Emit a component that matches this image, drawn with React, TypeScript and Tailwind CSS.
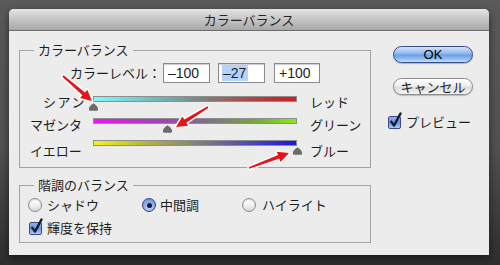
import React from "react";

const JP = "font-['Noto_Sans_CJK_JP','Noto_Sans_CJK_SC',sans-serif]";
const LAT = "font-['Liberation_Sans',Arial,sans-serif]";

function Thumb({ value }: { value: number }) {
  const left = ((value + 100) / 200) * 204 - 4.5;
  return (
    <svg
      width="9"
      height="8"
      viewBox="0 0 9 8"
      className="absolute top-[7px]"
      style={{ left }}
    >
      <path
        d="M4.5 0.3 C5.8 1.6 9 3.2 9 5.6 L9 6.5 C9 7.3 8.4 7.8 7.6 7.8 L1.4 7.8 C0.6 7.8 0 7.3 0 6.5 L0 5.6 C0 3.2 3.2 1.6 4.5 0.3 Z"
        fill="#6b6b6b"
      />
    </svg>
  );
}

function Track({ grad, value }: { grad: string; value: number }) {
  return (
    <div className="relative w-[204px] h-[22px] shrink-0">
      <div className={`h-[6px] border border-[#8e8e8e] ${grad}`} />
      <Thumb value={value} />
    </div>
  );
}

function Radio({ checked }: { checked?: boolean }) {
  if (checked) {
    return (
      <div className="w-[14px] h-[14px] rounded-full border border-[#34437c] bg-[radial-gradient(circle_at_50%_70%,#c4dcfa_0%,#8fb2ea_45%,#5f85cf_100%)] flex items-center justify-center shrink-0">
        <div className="w-[5px] h-[5px] rounded-full bg-[#131a33]" />
      </div>
    );
  }
  return (
    <div className="w-[14px] h-[14px] rounded-full border border-[#8a8a8a] bg-[linear-gradient(180deg,#ffffff_0%,#f2f2f2_50%,#d6d6d6_100%)] shadow-[inset_0_1px_1px_rgba(0,0,0,0.15)] shrink-0" />
  );
}

function Check() {
  return (
    <div className="relative w-[13px] h-[13px] shrink-0 rounded-[2px] border border-[#3d4c86] bg-[linear-gradient(180deg,#8fb0ea_0%,#6b93dc_50%,#a9cbf5_100%)]">
      <svg
        width="14"
        height="16"
        viewBox="0 0 14 16"
        className="absolute left-[0px] top-[-5px] overflow-visible"
      >
        <path
          d="M2.2 9.6 L5 13.6 L11.6 1.4"
          fill="none"
          stroke="#141a30"
          strokeWidth="2.3"
          strokeLinecap="round"
          strokeLinejoin="round"
        />
      </svg>
    </div>
  );
}

function arrowPoints(x1: number, y1: number, x2: number, y2: number) {
  const dx = x2 - x1;
  const dy = y2 - y1;
  const L = Math.hypot(dx, dy);
  const ux = dx / L;
  const uy = dy / L;
  const nx = -uy;
  const ny = ux;
  const headLen = 11;
  const headW = 5.5;
  const st = 0.9;
  const sh = 1.9;
  const bx = x2 - ux * headLen;
  const by = y2 - uy * headLen;
  const pts = [
    [x1 + nx * st, y1 + ny * st],
    [bx + nx * sh, by + ny * sh],
    [bx + nx * headW, by + ny * headW],
    [x2, y2],
    [bx - nx * headW, by - ny * headW],
    [bx - nx * sh, by - ny * sh],
    [x1 - nx * st, y1 - ny * st],
  ];
  return pts.map((p) => `${p[0].toFixed(1)},${p[1].toFixed(1)}`).join(" ");
}

function Arrow({ a }: { a: [number, number, number, number] }) {
  const pts = arrowPoints(a[0], a[1], a[2], a[3]);
  return (
    <g>
      <polygon points={pts} fill="#ffffff" stroke="#ffffff" strokeWidth="3" strokeLinejoin="round" />
      <polygon points={pts} fill="#e8121b" />
    </g>
  );
}

function SliderRow({
  left,
  leftCls,
  right,
  labelCls,
  grad,
  value,
}: {
  left: string;
  leftCls: string;
  right: string;
  labelCls: string;
  grad: string;
  value: number;
}) {
  return (
    <div className="flex h-[22px]">
      <div className={`w-[73px] shrink-0 text-[13px] leading-[16px] ${leftCls} ${labelCls}`}>{left}</div>
      <Track grad={grad} value={value} />
      <div className={`ml-[13px] text-[13px] leading-[16px] ${labelCls}`}>{right}</div>
    </div>
  );
}

export default function App() {
  return (
    <div
      className={`relative w-[500px] h-[265px] overflow-hidden bg-[linear-gradient(180deg,#5a5a5a_0%,#525252_55%,#2e2e2e_100%)] pl-[9px] pt-[9px] text-[#1e1e1e] ${JP}`}
    >
      <div className="w-[480px] h-[246px] rounded-t-[5px] bg-[#ececec] shadow-[0_3px_8px_rgba(0,0,0,0.55)] flex flex-col overflow-hidden">
        <div className="h-[22px] shrink-0 border-b border-[#6c6c6c] bg-[linear-gradient(180deg,#e4e4e4_0%,#c4c4c4_50%,#a8a8a8_100%)] flex items-center justify-center text-[13px] leading-none text-[#262626]">
          カラーバランス
        </div>
        <div className="flex pl-[10px]">
          <div className="w-[352px] pt-[11px] shrink-0">
            <fieldset className="border border-[#a2a2a2]">
              <legend className="ml-[14px] px-[4px] text-[13px] leading-[16px]">カラーバランス</legend>
              <div className="mt-[5px] h-[20px] flex items-center pl-[50px]">
                <div className="w-[93px] shrink-0 text-[13px] leading-[16px]">カラーレベル：</div>
                <div className={`w-[47px] h-[20px] border border-[#8a8a8a] bg-white shadow-[inset_0_1px_1px_rgba(0,0,0,0.2)] pl-[4px] text-[14px] leading-[18px] ${LAT}`}>
                  –100
                </div>
                <div className={`ml-[8px] w-[47px] h-[20px] border border-[#8a8a8a] bg-white shadow-[inset_0_1px_1px_rgba(0,0,0,0.2)] pl-[3px] pt-[1px] text-[14px] leading-[16px] ${LAT}`}>
                  <span className="bg-[#b3d3fd] inline-block pl-[1px] pr-[2px]">–27</span>
                </div>
                <div className={`ml-[9px] w-[46px] h-[20px] border border-[#8a8a8a] bg-white shadow-[inset_0_1px_1px_rgba(0,0,0,0.2)] pl-[4px] text-[14px] leading-[18px] ${LAT}`}>
                  +100
                </div>
              </div>
              <div className="mt-[13px] pb-[5px]">
                <SliderRow
                  left="シアン"
                  leftCls="pl-[23px] tracking-[1.5px]"
                  right="レッド"
                  labelCls="mt-[-2px]"
                  grad="bg-[linear-gradient(90deg,#86f6f6_0%,#6fbcbc_30%,#7f7f7f_55%,#b04040_80%,#d61b1b_100%)]"
                  value={-100}
                />
                <SliderRow
                  left="マゼンタ"
                  leftCls="pl-[10px]"
                  right="グリーン"
                  labelCls="mt-[-1px]"
                  grad="bg-[linear-gradient(90deg,#ee16f0_0%,#a43cc0_30%,#7e6f86_55%,#78a83a_80%,#82ee12_100%)]"
                  value={-27}
                />
                <SliderRow
                  left="イエロー"
                  leftCls="pl-[10px]"
                  right="ブルー"
                  labelCls="mt-[3px]"
                  grad="bg-[linear-gradient(90deg,#f6f21a_0%,#b8b440_25%,#7a7a80_55%,#4a44b8_80%,#1c14e6_100%)]"
                  value={100}
                />
              </div>
            </fieldset>
            <fieldset className="mt-[9px] border border-[#a2a2a2]">
              <legend className="ml-[14px] px-[4px] text-[13px] leading-[16px]">階調のバランス</legend>
              <div className="mt-[5px] h-[14px] flex items-center pl-[8px] text-[13px]">
                <div className="w-[114px] flex items-center gap-[5px] shrink-0">
                  <Radio />
                  <span className="leading-[14px]">シャドウ</span>
                </div>
                <div className="w-[100px] flex items-center gap-[4px] shrink-0">
                  <Radio checked />
                  <span className="leading-[14px]">中間調</span>
                </div>
                <div className="flex items-center gap-[6px]">
                  <Radio />
                  <span className="leading-[14px]">ハイライト</span>
                </div>
              </div>
              <div className="mt-[9px] h-[14px] flex items-center pl-[9px] gap-[5px] text-[13px]">
                <Check />
                <span className="leading-[14px]">輝度を保持</span>
              </div>
              <div className="h-[7px]" />
            </fieldset>
          </div>
          <div className="ml-[22px] w-[80px] pt-[15px] flex flex-col shrink-0">
            <div
              className={`h-[17px] rounded-full border border-[#3a4a8e] bg-[linear-gradient(180deg,#d2e3fa_0%,#98bcef_40%,#6e9fe6_55%,#8ec0f2_80%,#c4e4fc_100%)] shadow-[0_1px_1px_rgba(0,0,0,0.25)] flex items-center justify-center text-[13px] leading-none text-black ${LAT}`}
            >
              OK
            </div>
            <div className="mt-[15px] h-[17px] rounded-full border border-[#8c8c8c] bg-[linear-gradient(180deg,#ffffff_0%,#f0f0f0_45%,#dedede_55%,#f4f4f4_100%)] shadow-[0_1px_1px_rgba(0,0,0,0.2)] flex items-center justify-center text-[13px] leading-none">
              キャンセル
            </div>
            <div className="mt-[20px] h-[14px] flex items-center gap-[5px] ml-[-5px] text-[13px]">
              <Check />
              <span className="leading-[14px]">プレビュー</span>
            </div>
          </div>
        </div>
      </div>
      <svg
        width="500"
        height="265"
        viewBox="0 0 500 265"
        className="absolute left-0 top-0 pointer-events-none"
      >
        <Arrow a={[63, 76, 92, 101]} />
        <Arrow a={[208, 107, 176, 127]} />
        <Arrow a={[249, 168, 289, 153]} />
      </svg>
    </div>
  );
}
